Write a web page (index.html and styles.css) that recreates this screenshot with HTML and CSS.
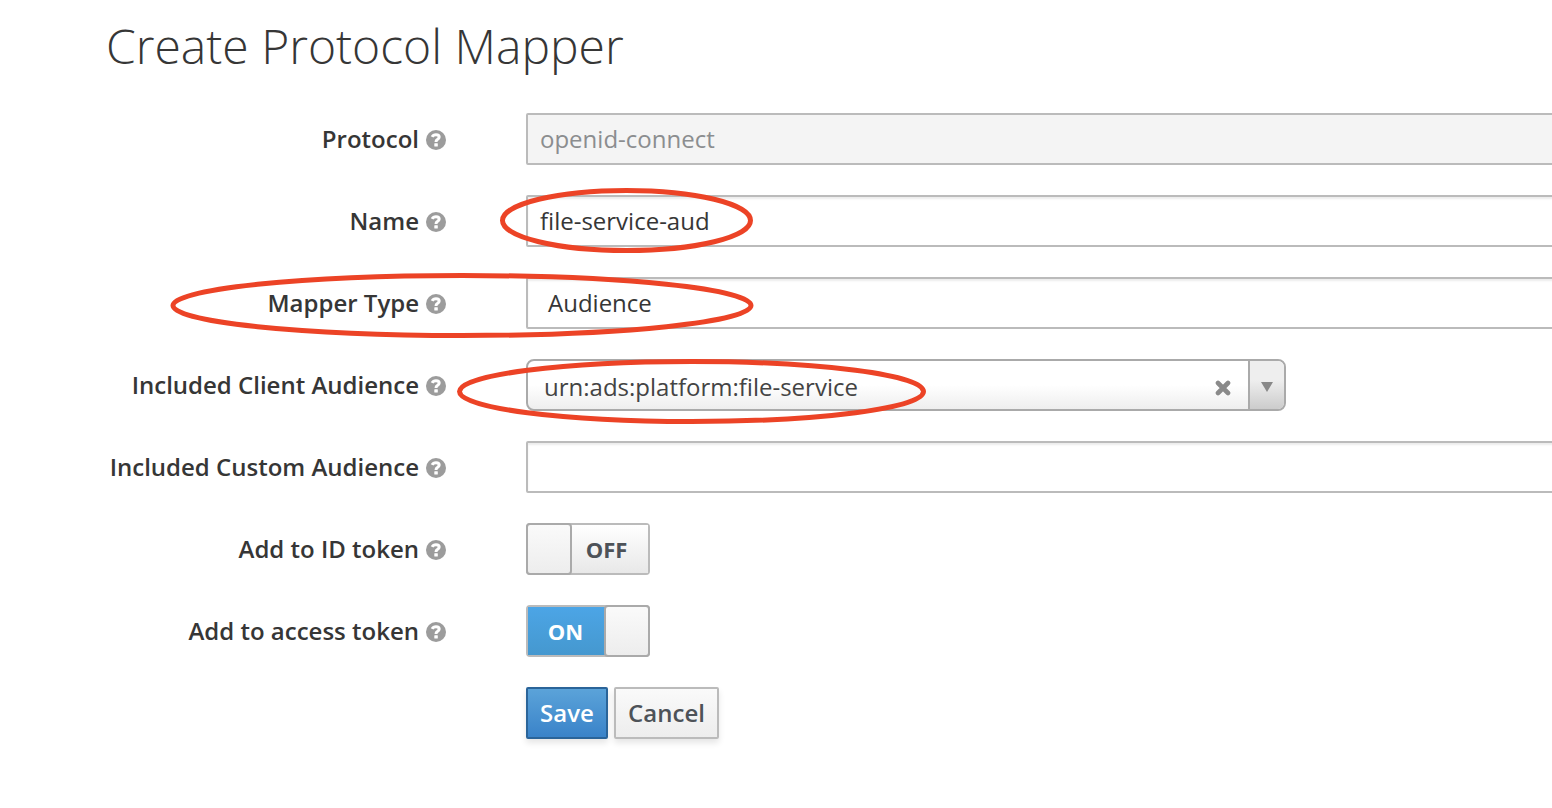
FILE: index.html
```html
<!DOCTYPE html>
<html lang="en">
<head>
<meta charset="utf-8">
<title>Create Protocol Mapper</title>
<link rel="stylesheet" href="styles.css">
</head>
<body>
<svg class="defs" width="0" height="0">
  <symbol id="help" viewBox="0 0 20 20">
    <circle cx="10" cy="10" r="10" fill="#9c9c9c"/>
    <path d="M6.1 6.9 C7 5.2 8.3 4.7 10 4.7 C12 4.7 13.2 5.7 13.2 7.1 C13.2 8.4 12.4 8.9 11.4 9.5 C10.4 10.1 10 10.6 10 12" fill="none" stroke="#fff" stroke-width="3"/>
    <rect x="8.3" y="13.2" width="3.5" height="3.3" rx=".5" fill="#fff"/>
  </symbol>
</svg>
<main class="page">
  <h1 class="title">Create Protocol Mapper</h1>
  <form class="form">
    <div class="row"><div class="label"><span>Protocol</span><svg class="help"><use href="#help"/></svg></div><div class="input disabled">openid-connect</div></div>
    <div class="row"><div class="label"><span>Name</span><svg class="help"><use href="#help"/></svg></div><div class="input">file-service-aud</div></div>
    <div class="row"><div class="label"><span>Mapper Type</span><svg class="help"><use href="#help"/></svg></div><div class="input select">Audience</div></div>
    <div class="row"><div class="label"><span>Included Client Audience</span><svg class="help"><use href="#help"/></svg></div>
      <div class="combo"><span class="combo-text">urn:ads:platform:file-service</span>
        <svg class="clear" viewBox="0 0 16 16"><path d="M3 3 L13 13 M13 3 L3 13" stroke="#8a8a8a" stroke-width="4.6" stroke-linecap="round"/></svg>
        <div class="arrow"><svg width="12" height="10" viewBox="0 0 12 10"><path d="M0 0H12L6 10Z" fill="#888"/></svg></div>
      </div>
    </div>
    <div class="row"><div class="label"><span>Included Custom Audience</span><svg class="help"><use href="#help"/></svg></div><div class="input"></div></div>
    <div class="row"><div class="label"><span>Add to ID token</span><svg class="help"><use href="#help"/></svg></div><div class="switch"><div class="knob knob-left"></div><span class="state off">OFF</span></div></div>
    <div class="row"><div class="label"><span>Add to access token</span><svg class="help"><use href="#help"/></svg></div><div class="switch"><span class="state on">ON</span><div class="knob knob-right"></div></div></div>
    <div class="row"><div class="label"></div><div class="buttons"><button type="button" class="btn primary">Save</button><button type="button" class="btn">Cancel</button></div></div>
  </form>
  <svg class="marks" viewBox="0 0 1552 808" fill="none" stroke="#ec4326" stroke-width="5">
    <ellipse cx="626.5" cy="220.5" rx="124" ry="30"/>
    <ellipse cx="462" cy="305.5" rx="289" ry="30"/>
    <ellipse cx="691.5" cy="391.5" rx="232" ry="30"/>
  </svg>
</main>
</body>
</html>
```

FILE: styles.css
```css
* { box-sizing: border-box; }
body {
  margin: 0;
  background: #fff;
  color: #363636;
  font-family: "Open Sans", "Noto Sans", sans-serif;
  font-size: 24px;
}
.defs { display: block; }
.page {
  position: relative;
  width: 1552px;
  height: 808px;
  overflow: hidden;
}
.title {
  margin: 0;
  padding: 13px 0 0 106px;
  height: 113px;
  font-size: 48px;
  font-weight: 300;
  line-height: 66px;
}
.form {
  display: flex;
  flex-direction: column;
  gap: 30px;
}
.row {
  display: grid;
  grid-template-columns: 446px 1fr;
  column-gap: 80px;
  height: 52px;
}
.label {
  display: flex;
  align-items: center;
  justify-content: flex-end;
  gap: 7px;
  padding-bottom: 2px;
  font-weight: 600;
  white-space: nowrap;
}
.help { width: 20px; height: 20px; margin-top: 3px; }
.input {
  height: 52px;
  margin-right: -20px;
  padding-left: 12px;
  border: 2px solid #bbb;
  border-radius: 2px;
  line-height: 48px;
  box-shadow: inset 0 2px 2px rgba(3, 3, 3, .075);
}
.disabled { background: #f4f4f4; color: #8b8d8f; box-shadow: none; }
.select { padding-left: 20px; }
.combo {
  display: flex;
  align-items: center;
  width: 760px;
  height: 52px;
  border: 2px solid #aaa;
  border-radius: 8px;
  overflow: hidden;
  background: linear-gradient(#fff 50%, #eee);
  color: #444;
}
.combo-text { flex: 1; padding: 2px 0 0 16px; }
.clear { width: 16px; height: 16px; margin: 6px 17px 0 0; }
.arrow {
  display: flex;
  align-items: center;
  justify-content: center;
  width: 36px;
  height: 48px;
  padding: 4px 0 0 0;
  border-left: 2px solid #aaa;
  background: linear-gradient(#eee 40%, #ccc);
}
.switch {
  display: flex;
  width: 124px;
  height: 52px;
  border: 2px solid #bbb;
  border-radius: 4px;
  font-size: 22px;
  font-weight: 700;
}
.knob {
  position: relative;
  flex: none;
  width: 46px;
  height: 52px;
  margin: -2px;
  border: 2px solid #aaa;
  border-radius: 4px;
  background: linear-gradient(#fafafa, #ededed);
}
.state {
  flex: 1;
  line-height: 48px;
  text-align: center;
}
.off { padding-right: 5px; color: #4d5258; background: linear-gradient(#fff, #e8e8e8); }
.on { padding-right: 3px; color: #fff; background: linear-gradient(#4ca5e6, #4598cf); }
.buttons { display: flex; gap: 6px; }
.btn {
  width: 105px;
  height: 52px;
  padding: 0;
  border: 2px solid #bbb;
  border-radius: 2px;
  background: linear-gradient(#fafafa, #ededed);
  box-shadow: 0 4px 6px rgba(3, 3, 3, .1);
  color: #4d5258;
  font: 600 24px/46px "Open Sans", "Noto Sans", sans-serif;
}
.primary {
  width: 82px;
  border-color: #2a6499;
  background: linear-gradient(#5ba3d9, #3a83c9);
  color: #fff;
}
.marks {
  position: absolute;
  inset: 0;
  width: 1552px;
  height: 808px;
  pointer-events: none;
}
```
